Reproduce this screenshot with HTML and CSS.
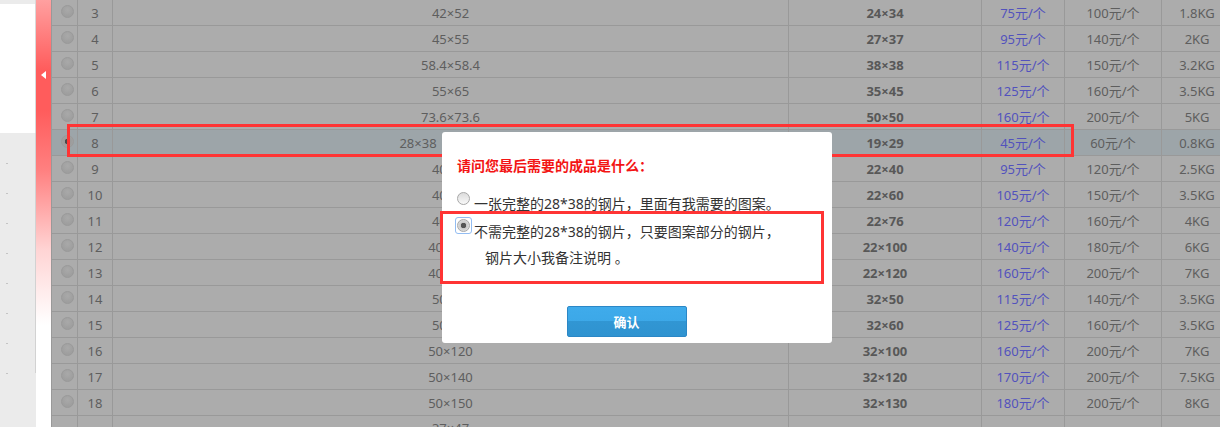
FILE: index.html
```html
<!DOCTYPE html>
<html lang="zh-CN">
<head>
<meta charset="utf-8">
<title>钢片选择</title>
<link rel="stylesheet" href="styles.css">
</head>
<body>
<aside class="sidebar">
  <div class="sidebar-top"></div>
  <div class="sidebar-panel"></div>
  <ul class="sidebar-list">
    <li><i></i></li><li><i></i></li><li><i></i></li><li><i></i></li>
    <li><i></i></li><li><i></i></li><li><i></i></li><li><i></i></li>
  </ul>
</aside>
<div class="toggle"><span class="arrow"></span></div>
<main class="main">
  <table class="grid">
    <colgroup>
      <col class="c-radio"><col class="c-no"><col class="c-size"><col class="c-inner"><col class="c-price"><col class="c-price2"><col class="c-weight">
    </colgroup>
    <tbody>
      <tr><td><span class="rb"></span></td><td>3</td><td>42×52</td><td class="b">24×34</td><td class="blue">75元/个</td><td>100元/个</td><td>1.8KG</td></tr>
      <tr><td><span class="rb"></span></td><td>4</td><td>45×55</td><td class="b">27×37</td><td class="blue">95元/个</td><td>140元/个</td><td>2KG</td></tr>
      <tr><td><span class="rb"></span></td><td>5</td><td>58.4×58.4</td><td class="b">38×38</td><td class="blue">115元/个</td><td>150元/个</td><td>3.2KG</td></tr>
      <tr><td><span class="rb"></span></td><td>6</td><td>55×65</td><td class="b">35×45</td><td class="blue">125元/个</td><td>160元/个</td><td>3.5KG</td></tr>
      <tr><td><span class="rb"></span></td><td>7</td><td>73.6×73.6</td><td class="b">50×50</td><td class="blue">160元/个</td><td>200元/个</td><td>5KG</td></tr>
      <tr class="sel"><td><span class="rb on"></span></td><td>8</td><td>28×38（小钢片）</td><td class="b">19×29</td><td class="blue">45元/个</td><td>60元/个</td><td>0.8KG</td></tr>
      <tr><td><span class="rb"></span></td><td>9</td><td>40×58</td><td class="b">22×40</td><td class="blue">95元/个</td><td>120元/个</td><td>2.5KG</td></tr>
      <tr><td><span class="rb"></span></td><td>10</td><td>40×78</td><td class="b">22×60</td><td class="blue">105元/个</td><td>150元/个</td><td>3.5KG</td></tr>
      <tr><td><span class="rb"></span></td><td>11</td><td>40×94</td><td class="b">22×76</td><td class="blue">120元/个</td><td>160元/个</td><td>4KG</td></tr>
      <tr><td><span class="rb"></span></td><td>12</td><td>40×118</td><td class="b">22×100</td><td class="blue">140元/个</td><td>180元/个</td><td>6KG</td></tr>
      <tr><td><span class="rb"></span></td><td>13</td><td>40×138</td><td class="b">22×120</td><td class="blue">160元/个</td><td>200元/个</td><td>7KG</td></tr>
      <tr><td><span class="rb"></span></td><td>14</td><td>50×68</td><td class="b">32×50</td><td class="blue">115元/个</td><td>140元/个</td><td>3.5KG</td></tr>
      <tr><td><span class="rb"></span></td><td>15</td><td>50×78</td><td class="b">32×60</td><td class="blue">125元/个</td><td>160元/个</td><td>3.5KG</td></tr>
      <tr><td><span class="rb"></span></td><td>16</td><td>50×120</td><td class="b">32×100</td><td class="blue">160元/个</td><td>200元/个</td><td>7KG</td></tr>
      <tr><td><span class="rb"></span></td><td>17</td><td>50×140</td><td class="b">32×120</td><td class="blue">170元/个</td><td>200元/个</td><td>7.5KG</td></tr>
      <tr><td><span class="rb"></span></td><td>18</td><td>50×150</td><td class="b">32×130</td><td class="blue">180元/个</td><td>200元/个</td><td>8KG</td></tr>
      <tr class="tall"><td><span class="rb"></span></td><td>19</td><td>37×47<br>（中心图案）</td><td class="b">19×29</td><td class="blue">45元/个</td><td>60元/个</td><td>0.8KG</td></tr>
    </tbody>
  </table>

  <div class="mark mark-row"></div>

  <div class="dialog">
    <div class="dlg-title">请问您最后需要的成品是什么：</div>
    <div class="opt opt-1"><span class="rd"></span><span class="opt-text">一张完整的28*38的钢片，里面有我需要的图案。</span></div>
    <div class="opt opt-2"><span class="focus"><span class="rd on"></span></span><div class="opt-text"><div>不需完整的28*38的钢片，只要图案部分的钢片，</div><div class="indent">钢片大小我备注说明 。</div></div></div>
    <div class="dlg-foot"><button class="btn">确认</button></div>
  </div>

  <div class="mark mark-opt"></div>
</main>
</body>
</html>
```

FILE: styles.css
```css
html, body {
  margin: 0;
  padding: 0;
}
body {
  width: 1220px;
  height: 427px;
  overflow: hidden;
  display: flex;
  font-family: "Noto Sans", "Noto Sans CJK SC", sans-serif;
  font-size: 13px;
  background: #ebebeb;
}

/* sidebar */
.sidebar {
  width: 36px;
  flex: none;
  display: flex;
  flex-direction: column;
  background: #ebebeb;
}
.sidebar-top {
  height: 4px;
  border-right: 1px solid #d9d9d9;
}
.sidebar-panel {
  height: 129px;
  background: #fff;
  border-right: 1px solid #d9d9d9;
}
.sidebar-list {
  list-style: none;
  margin: 0;
  padding: 30px 0 0;
  height: 210px;
  border-right: 1px solid #d2d2d2;
}
.sidebar-list li {
  height: 30px;
  display: flex;
  align-items: flex-start;
  padding-left: 6px;
}
.sidebar-list li i {
  display: block;
  width: 2px;
  height: 1px;
  background: #c4c4c4;
}

/* toggle strip */
.toggle {
  width: 15px;
  flex: none;
  background: linear-gradient(to bottom, #ffa0a0 0px, #ff5c5c 70px, #ff5c5c 110px, #ff8080 170px, #ffd4d4 250px, #fff 325px, #fff 100%);
  display: flex;
  flex-direction: column;
  align-items: center;
  padding-top: 71px;
  box-sizing: border-box;
}
.arrow {
  display: block;
  width: 0;
  height: 0;
  border-top: 4px solid transparent;
  border-bottom: 4px solid transparent;
  border-right: 5px solid #fff;
}

/* main table area */
.main {
  flex: 1;
  position: relative;
  overflow: hidden;
  background: #acacac;
}
.grid {
  border-collapse: collapse;
  table-layout: fixed;
  width: 1181px;
  margin-top: -1px;
  color: #5e5e5e;
  background: #acacac;
}
.c-radio { width: 26px; }
.c-no { width: 35px; }
.c-size { width: 676px; }
.c-inner { width: 193px; }
.c-price { width: 83px; }
.c-price2 { width: 97px; }
.c-weight { width: 71px; }
.grid td {
  border: 1px solid #999;
  height: 25px;
  padding: 0;
  text-align: center;
  vertical-align: middle;
  line-height: 18px;
  white-space: nowrap;
}
.grid tr.tall td {
  height: 41px;
}
.grid tr.sel td {
  background: #9da5a9;
}
.grid td.b {
  font-weight: bold;
  color: #585858;
}
.grid td.blue {
  color: #5252bd;
}
.rb {
  display: block;
  width: 11px;
  height: 11px;
  margin: -2px 0 0 9px;
  border-radius: 50%;
  border: 1px solid #9a9a9a;
  background: radial-gradient(circle at 50% 35%, #a9a9a9 0, #9e9e9e 70%);
}
.rb.on {
  background: radial-gradient(circle, #4a4a4a 0 2.5px, #9b9b9b 3px, #a4a4a4 100%);
}

/* dialog */
.dialog {
  position: absolute;
  left: 391px;
  top: 132px;
  width: 390px;
  height: 211px;
  box-sizing: border-box;
  padding: 24px 15px 0;
  background: #fff;
  border-radius: 3px;
  color: #333;
  font-size: 14px;
  display: flex;
  flex-direction: column;
}
.dlg-title {
  line-height: 20px;
  color: #f31414;
  font-weight: bold;
}
.opt {
  display: flex;
  align-items: flex-start;
  gap: 4px;
  line-height: 26px;
}
.opt-1 {
  margin-top: 15px;
}
.opt-2 {
  margin-top: 2px;
}
.rd {
  display: block;
  flex: none;
  width: 11px;
  height: 11px;
  margin-top: 1px;
  border-radius: 50%;
  border: 1px solid #a8a8a8;
  background: linear-gradient(to bottom, #dcdcdc, #f8f8f8);
}
.rd.on {
  margin-top: 0;
  background: radial-gradient(circle, #555 0 2.5px, #c8c8c8 3px, #eee 100%);
}
.focus {
  display: block;
  flex: none;
  margin: -2px -2px 0;
  padding: 1px;
  border: 1px solid #93bdf2;
  border-radius: 3px;
}
.indent {
  padding-left: 11px;
}
.dlg-foot {
  margin-top: 35px;
  padding-right: 21px;
  display: flex;
  justify-content: center;
}
.btn {
  width: 120px;
  height: 31px;
  padding: 0;
  border: 1px solid #2b87c6;
  border-radius: 2px;
  background: linear-gradient(to bottom, #3fabeb 0, #3ca8e8 50%, #3196d3 50%, #2f93d0 100%);
  color: #fff;
  font-family: "Noto Sans", "Noto Sans CJK SC", sans-serif;
  font-size: 13px;
  font-weight: bold;
}

/* red annotation frames */
.mark {
  position: absolute;
  border: 3px solid #ff3434;
  box-sizing: border-box;
  pointer-events: none;
}
.mark-row {
  left: 16px;
  top: 124px;
  width: 1007px;
  height: 33px;
}
.mark-opt {
  left: 389px;
  top: 211px;
  width: 384px;
  height: 73px;
}
```
